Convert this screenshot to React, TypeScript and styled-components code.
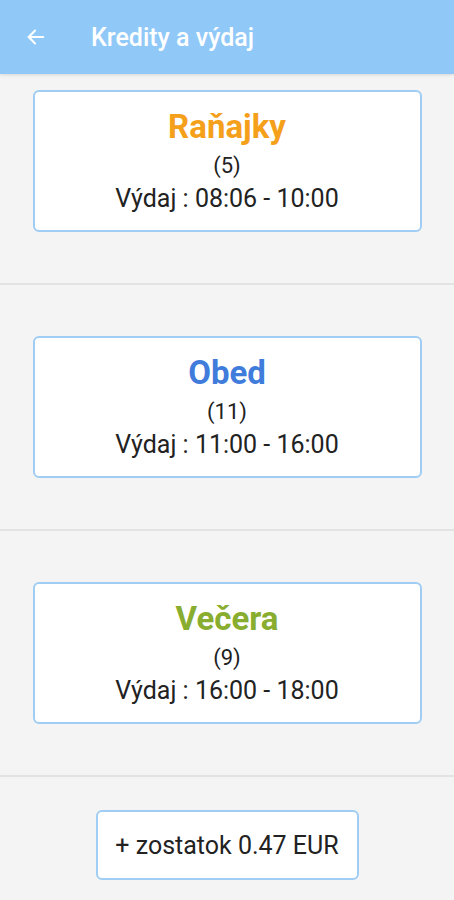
import styled, { createGlobalStyle } from 'styled-components';

const GlobalStyle = createGlobalStyle`
  html, body {
    margin: 0;
    padding: 0;
    background: #f4f4f4;
  }
  body {
    font-family: Roboto, "Noto Sans", sans-serif;
  }
`;

const Screen = styled.div`
  width: 454px;
  height: 900px;
  overflow: hidden;
  display: flex;
  flex-direction: column;
  background: #f4f4f4;
`;

const AppBar = styled.header`
  height: 74px;
  flex-shrink: 0;
  display: flex;
  align-items: center;
  padding-left: 25px;
  background: #90c9f8;
  box-shadow: 0 1px 3px rgb(0 0 0 / 0.12);
`;

const BackButton = styled.button`
  width: 22px;
  height: 24px;
  padding: 0;
  border: none;
  background: none;
  display: flex;
  align-items: center;
  justify-content: center;
  color: #fff;
`;

const BarTitle = styled.h1`
  margin: 0 0 0 44px;
  color: #fff;
  font-size: 25px;
  font-weight: 500;
`;

const Section = styled.section<{ $first?: boolean }>`
  display: flex;
  justify-content: center;
  padding: ${(p) => (p.$first ? '16px' : '51px')} 0 51px;
  border-bottom: 2px solid #e3e3e3;
`;

const MealCard = styled.div`
  width: 389px;
  height: 142px;
  box-sizing: border-box;
  display: flex;
  flex-direction: column;
  align-items: center;
  padding-top: 14px;
  background: #fff;
  border: 2px solid #9fcdf3;
  border-radius: 6px;
`;

const MealName = styled.div<{ $color: string }>`
  color: ${(p) => p.$color};
  font-size: 33px;
  font-weight: 700;
  line-height: 42px;
`;

const Count = styled.div`
  margin-top: 3px;
  color: #222;
  font-size: 22px;
  line-height: 30px;
`;

const Serving = styled.div`
  color: #222;
  font-size: 25px;
  line-height: 36px;
`;

const Footer = styled.div`
  display: flex;
  justify-content: center;
  padding-top: 33px;
`;

const BalanceButton = styled.button`
  width: 263px;
  height: 70px;
  background: #fff;
  border: 2px solid #9fcdf3;
  border-radius: 6px;
  color: #222;
  font-family: Roboto, "Noto Sans", sans-serif;
  font-size: 25px;
`;

const meals = [
  { name: 'Raňajky', color: '#f5a01b', count: 5, from: '08:06', to: '10:00' },
  { name: 'Obed', color: '#3f7cdc', count: 11, from: '11:00', to: '16:00' },
  { name: 'Večera', color: '#89ad2f', count: 9, from: '16:00', to: '18:00' },
];

export default function App() {
  return (
    <Screen>
      <GlobalStyle />
      <AppBar>
        <BackButton aria-label="Späť">
          <svg width="22" height="22" viewBox="0 0 24 24" fill="none" stroke="currentColor" strokeWidth="2.2" strokeLinecap="round" strokeLinejoin="round">
            <path d="M20 12H4" />
            <path d="M11 5l-7 7 7 7" />
          </svg>
        </BackButton>
        <BarTitle>Kredity a výdaj</BarTitle>
      </AppBar>
      {meals.map((m, i) => (
        <Section key={m.name} $first={i === 0}>
          <MealCard>
            <MealName $color={m.color}>{m.name}</MealName>
            <Count>({m.count})</Count>
            <Serving>
              Výdaj : {m.from} - {m.to}
            </Serving>
          </MealCard>
        </Section>
      ))}
      <Footer>
        <BalanceButton>+ zostatok 0.47 EUR</BalanceButton>
      </Footer>
    </Screen>
  );
}
